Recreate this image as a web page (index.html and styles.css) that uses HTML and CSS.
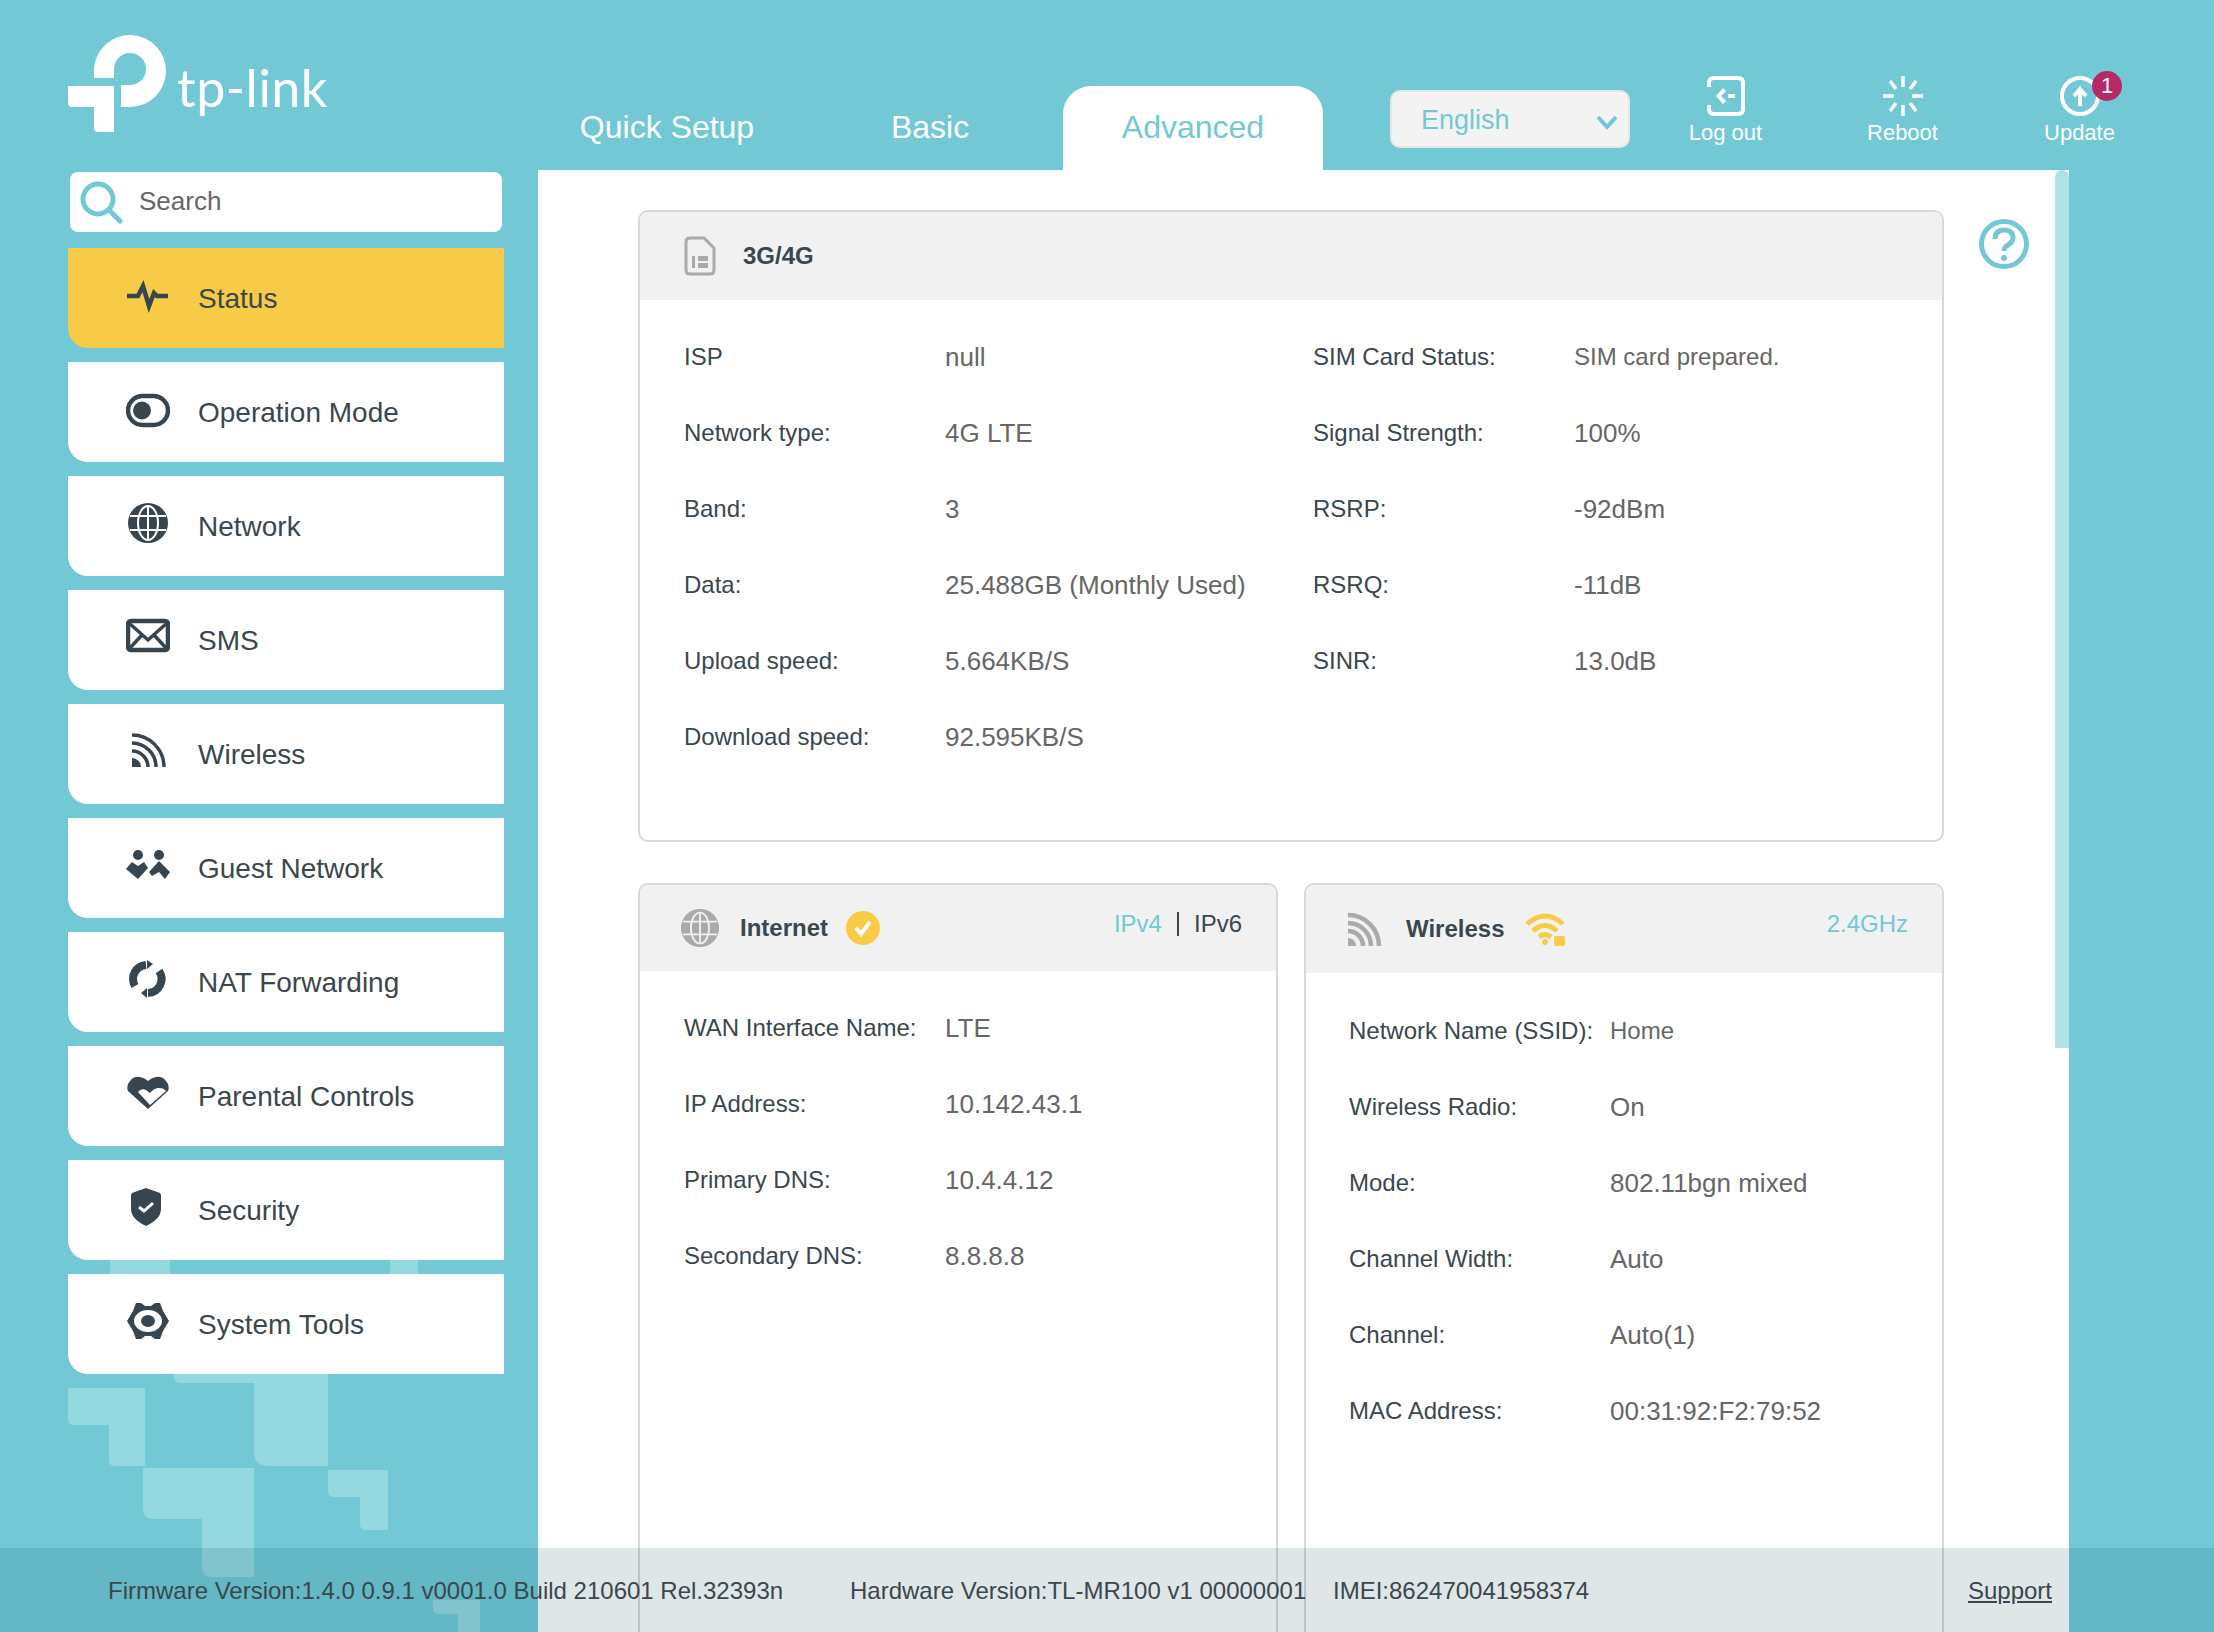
FILE: index.html
```html
<!DOCTYPE html>
<html>
<head>
<title>TP-Link Status</title>
<link rel="stylesheet" href="styles.css">
</head>
<body>

<!-- big faded logo behind the menu -->
<svg class="watermark" width="538" height="262" viewBox="0 0 538 262">
    <path d="M68 18H145V96H115Q109 96 109 90V55H74Q68 55 68 49Z"/>
    <path d="M173 4H254V13H181Q173 13 173 4Z"/>
    <path d="M254 4H328V96H268Q254 96 254 82Z"/>
    <path d="M143 98H254V207H212Q202 207 202 197V149H153Q143 149 143 139Z"/>
    <path d="M328 100H388V160H366Q360 160 360 154V127H334Q328 127 328 121Z"/>
    <path d="M433 230H480V262H458V244H439Q433 244 433 238Z"/>
</svg>
<svg class="watermark-top" width="420" height="14" viewBox="0 0 420 14">
    <rect x="110" width="60" height="14"/>
    <rect x="390" width="28" height="14"/>
</svg>

<div class="header">
    <div class="logo">
        <svg width="100" height="100" viewBox="68 33 100 100">
            <path d="M94 78V69A36 36 0 1 1 130 107H121V85H130A16 16 0 1 0 114 69V78Z"/>
            <path d="M68 86H114V132H98Q94 132 94 128V107H72Q68 107 68 103Z"/>
        </svg>
        <span class="logo-name">tp-link</span>
    </div>
    <div class="tabs">
        <div class="tab">Quick Setup</div>
        <div class="tab">Basic</div>
        <div class="tab active">Advanced</div>
    </div>
    <div class="lang">
        <span>English</span>
        <svg width="22" height="16" viewBox="0 0 22 16"><path d="M2 3L11 13L20 3"/></svg>
    </div>
    <div class="actions">
        <div class="action">
            <svg width="40" height="40" viewBox="0 0 40 40">
                <path d="M3 11V7Q3 2 8 2H32Q37 2 37 7V33Q37 38 32 38H8Q3 38 3 33V29"/>
                <path class="solid" d="M17 12L10 20L17 28L20 25L15 20L20 15Z"/>
                <path d="M22 20H29"/>
            </svg>
            <span>Log out</span>
        </div>
        <div class="action">
            <svg width="40" height="40" viewBox="0 0 40 40">
                <path class="spokes" d="M20 0V11M20 29V40M0 20H11M29 20H40M7 5L13 13M27 27L33 35M33 5L27 13M13 27L7 35"/>
            </svg>
            <span>Reboot</span>
        </div>
        <div class="action">
            <svg width="40" height="40" viewBox="0 0 40 40">
                <circle cx="20" cy="20" r="18"/>
                <path d="M20 30V14M14 20L20 13L26 20"/>
            </svg>
            <span>Update</span>
            <div class="badge">1</div>
        </div>
    </div>
</div>

<div class="main">
    <div class="sidebar">
        <div class="search">
            <svg width="44" height="44" viewBox="0 0 44 44">
                <circle cx="18" cy="18" r="15"/>
                <path d="M29 29L40 40"/>
            </svg>
            <span>Search</span>
        </div>
        <div class="menu">
            <div class="menu-item selected">
                <svg class="menu-icon" width="44" height="44" viewBox="0 0 44 44"><path class="line" d="M1 23H12L17 13L23 33L28 20L31 23H42"/></svg>
                Status
            </div>
            <div class="menu-item">
                <svg class="menu-icon" width="44" height="44" viewBox="0 0 44 44"><rect class="line" x="2" y="9" width="40" height="29" rx="14.5"/><circle cx="16" cy="23.5" r="9"/></svg>
                Operation Mode
            </div>
            <div class="menu-item">
                <svg class="menu-icon" width="44" height="44" viewBox="0 0 44 44">
                    <circle cx="22" cy="22" r="20"/>
                    <path class="cut" d="M4 15H40M4 29H40M22 6V38"/>
                    <ellipse class="cut" cx="22" cy="22" rx="10" ry="17"/>
                </svg>
                Network
            </div>
            <div class="menu-item">
                <svg class="menu-icon" width="44" height="44" viewBox="0 0 44 44"><rect class="line" x="2" y="6" width="40" height="29" rx="3"/><path class="thin" d="M3 8L22 25L41 8M3 34L16 20M41 34L28 20"/></svg>
                SMS
            </div>
            <div class="menu-item">
                <svg class="menu-icon" width="44" height="44" viewBox="0 0 44 44">
                    <path class="thin" d="M6 6A32 32 0 0 1 38 38M6 14A24 24 0 0 1 30 38M6 22A16 16 0 0 1 22 38"/>
                    <path d="M6 29A9 9 0 0 1 15 38H6Z"/>
                </svg>
                Wireless
            </div>
            <div class="menu-item">
                <svg class="menu-icon" width="44" height="44" viewBox="0 0 44 44">
                    <circle cx="12" cy="12" r="5"/><circle cx="33" cy="12" r="5"/>
                    <path d="M0 26L6 19L12 23L18 19L22 25L12 36Z"/>
                    <path d="M44 29L33 18L23 29L26 33L33 29L39 36Z"/>
                </svg>
                Guest Network
            </div>
            <div class="menu-item">
                <svg class="menu-icon" width="44" height="44" viewBox="0 0 44 44">
                    <path class="line wide" d="M9 29A14 14 0 0 1 20 8M33 14A14 14 0 0 1 22 36"/>
                    <path d="M21 3L27 7L21 12ZM21 31L15 36L21 41Z"/>
                </svg>
                NAT Forwarding
            </div>
            <div class="menu-item">
                <svg class="menu-icon" width="44" height="44" viewBox="0 0 44 44">
                    <path d="M22 38L2 20Q0 15 4 10Q8 5 14 6Q19 7 22 10Q25 7 30 6Q36 5 40 10Q44 15 42 20Z"/>
                    <path class="white" d="M24 34L12 21Q15 17 20 19L24 22Q28 17 33 17Q38 17 40 20Z"/>
                </svg>
                Parental Controls
            </div>
            <div class="menu-item">
                <svg class="menu-icon" width="44" height="44" viewBox="0 0 44 44">
                    <path d="M20 3L34 8Q35 9 35 11V24Q35 34 20 41Q5 34 5 24V11Q5 9 6 8Z"/>
                    <path class="tick" d="M13 22L18 26L27 18"/>
                </svg>
                Security
            </div>
            <div class="menu-item">
                <svg class="menu-icon" width="44" height="44" viewBox="0 0 44 44">
                    <path d="M10 4H15L19 7H25L29 4H34L37 12L43 22L37 32L34 40H29L25 37H19L15 40H10L7 32L1 22L7 12Z"/>
                    <ellipse class="white" cx="22" cy="22" rx="14" ry="11"/>
                    <ellipse cx="22" cy="22" rx="7" ry="6"/>
                </svg>
                System Tools
            </div>
        </div>
    </div>

    <div class="panel">
        <div class="content">
            <div class="card top-card">
                <div class="card-head">
                    <svg class="sim-icon" width="32" height="40" viewBox="0 0 32 40">
                        <path class="outline" d="M6 2H20L30 12V34Q30 38 26 38H6Q2 38 2 34V6Q2 2 6 2Z"/>
                        <path class="solid" d="M8 20H11V32H8ZM14 20H24V25H14ZM14 27H24V32H14Z"/>
                    </svg>
                    <span class="card-title">3G/4G</span>
                </div>
                <div class="info four-col">
                    <div class="label">ISP</div><div class="value">null</div>
                    <div class="label">SIM Card Status:</div><div class="value small">SIM card prepared.</div>
                    <div class="label">Network type:</div><div class="value">4G LTE</div>
                    <div class="label">Signal Strength:</div><div class="value">100%</div>
                    <div class="label">Band:</div><div class="value">3</div>
                    <div class="label">RSRP:</div><div class="value">-92dBm</div>
                    <div class="label">Data:</div><div class="value">25.488GB (Monthly Used)</div>
                    <div class="label">RSRQ:</div><div class="value">-11dB</div>
                    <div class="label">Upload speed:</div><div class="value">5.664KB/S</div>
                    <div class="label">SINR:</div><div class="value">13.0dB</div>
                    <div class="label">Download speed:</div><div class="value">92.595KB/S</div>
                </div>
            </div>

            <div class="card-row">
                <div class="card">
                    <div class="card-head short">
                        <svg class="globe-icon" width="40" height="40" viewBox="0 0 44 44">
                            <circle class="solid" cx="22" cy="22" r="21"/>
                            <path class="grid" d="M3 15H41M3 29H41M22 6V38"/>
                            <ellipse class="grid" cx="22" cy="22" rx="10" ry="17"/>
                        </svg>
                        <span class="card-title">Internet</span>
                        <svg class="status-icon" width="34" height="34" viewBox="0 0 34 34">
                            <circle cx="17" cy="17" r="17"/>
                            <path d="M10 17L15 23L24 11"/>
                        </svg>
                        <div class="card-link"><span class="on">IPv4</span><span class="sep"></span><span>IPv6</span></div>
                    </div>
                    <div class="info two-col">
                        <div class="label">WAN Interface Name:</div><div class="value">LTE</div>
                        <div class="label">IP Address:</div><div class="value">10.142.43.1</div>
                        <div class="label">Primary DNS:</div><div class="value">10.4.4.12</div>
                        <div class="label">Secondary DNS:</div><div class="value">8.8.8.8</div>
                    </div>
                </div>
                <div class="card">
                    <div class="card-head wide-pad">
                        <svg class="wifi-grey" width="36" height="36" viewBox="0 0 36 36">
                            <path d="M1 4A31 31 0 0 1 32 35M1 12A23 23 0 0 1 24 35M1 20A15 15 0 0 1 16 35"/>
                            <path class="fill" d="M1 27A8 8 0 0 1 9 35H1Z"/>
                        </svg>
                        <span class="card-title">Wireless</span>
                        <svg class="wifi-yellow" width="42" height="34" viewBox="0 0 42 34">
                            <path d="M2 12Q20 -4 38 12M8 19Q20 8 32 19M14 25Q20 20 26 25"/>
                            <circle class="fill" cx="20" cy="30" r="3"/>
                            <rect class="fill" x="29" y="24" width="11" height="10" rx="2"/>
                        </svg>
                        <div class="card-link"><span class="on">2.4GHz</span></div>
                    </div>
                    <div class="info two-col">
                        <div class="label">Network Name (SSID):</div><div class="value small">Home</div>
                        <div class="label">Wireless Radio:</div><div class="value">On</div>
                        <div class="label">Mode:</div><div class="value">802.11bgn mixed</div>
                        <div class="label">Channel Width:</div><div class="value">Auto</div>
                        <div class="label">Channel:</div><div class="value">Auto(1)</div>
                        <div class="label">MAC Address:</div><div class="value">00:31:92:F2:79:52</div>
                    </div>
                </div>
            </div>
        </div>
        <svg class="help" width="50" height="50" viewBox="0 0 50 50">
            <circle cx="25" cy="25" r="22.5"/>
            <path d="M16 20Q16 11 25 11Q34 11 34 19Q34 23 29 26Q25 28 25 32"/>
            <circle class="dot" cx="25" cy="39" r="3"/>
        </svg>
        <div class="scrollbar"><div class="thumb"></div></div>
    </div>
</div>

<div class="footer">
    <span class="firmware">Firmware Version:1.4.0 0.9.1 v0001.0 Build 210601 Rel.32393n</span>
    <span class="hardware">Hardware Version:TL-MR100 v1 00000001</span>
    <span class="imei">IMEI:862470041958374</span>
    <a class="support">Support</a>
</div>

</body>
</html>
```

FILE: styles.css
```css
* { box-sizing: border-box; }
body { margin: 0; width: 2214px; height: 1632px; position: relative; overflow: hidden; background: #72c9d5; font-family: "Liberation Sans", Arial, sans-serif; color: #3a474e; }

.watermark { position: absolute; left: 0; top: 1370px; fill: #94d8e0; }
.watermark-top { position: absolute; left: 0; top: 1260px; fill: #94d8e0; }

.header { display: flex; height: 170px; position: relative; }
.logo { width: 537px; padding: 33px 0 0 68px; display: flex; align-items: flex-start; }
.logo svg { fill: white; flex: none; }
.logo-name { font-family: Lato, sans-serif; font-weight: 400; font-size: 52px; color: white; margin: 24px 0 0 9px; line-height: 60px; letter-spacing: 0.5px; }
.tabs { display: flex; gap: 3px; align-self: flex-end; }
.tab { width: 260px; height: 84px; padding-top: 20px; text-align: center; font-size: 32px; line-height: 42px; color: white; border-radius: 28px 28px 0 0; }
.tab.active { background: white; color: #72c9d5; }
.lang { width: 240px; height: 58px; margin: 90px 0 0 67px; padding: 3px 10px 0 29px; display: flex; align-items: center; justify-content: space-between; background: #f3f3f3; border: 2px solid #e6e6e6; border-radius: 10px; font-size: 27px; color: #72c9d5; }
.lang svg { fill: none; stroke: #72c9d5; stroke-width: 4; margin-top: 2px; }
.actions { display: flex; margin-left: 7px; padding-top: 76px; }
.action { width: 177px; position: relative; display: flex; flex-direction: column; align-items: center; color: white; font-size: 22px; }
.action svg { fill: none; stroke: white; stroke-width: 4; }
.action svg .solid { fill: white; stroke: none; }
.action svg .spokes { stroke-width: 3.5; }
.action span { margin-top: 4px; line-height: 26px; }
.badge { position: absolute; left: 101px; top: -5px; width: 30px; height: 30px; border-radius: 50%; background: #b32a66; color: white; font-size: 22px; line-height: 30px; text-align: center; }

.main { display: flex; height: 1462px; position: relative; }
.sidebar { width: 538px; padding: 2px 34px 0 68px; }
.search { width: 432px; height: 60px; margin-left: 2px; padding: 0 0 2px 10px; display: flex; align-items: center; gap: 14px; background: white; border-radius: 8px; font-size: 26px; color: #666; }
.search svg { fill: none; stroke: #72c9d5; stroke-width: 5; stroke-linecap: round; flex: none; margin-top: 4px; }
.search span { margin-left: 1px; }
.menu { display: flex; flex-direction: column; gap: 14px; margin-top: 16px; }
.menu-item { width: 436px; height: 100px; padding: 2px 0 0 58px; display: flex; align-items: center; gap: 28px; background: white; border-radius: 0 0 0 20px; font-size: 28px; }
.menu-item.selected { background: #f7cb45; }
.menu-icon { fill: #36454f; margin-bottom: 9px; flex: none; }
.menu-icon .line { fill: none; stroke: #36454f; stroke-width: 4.5; }
.menu-icon .line.wide { stroke-width: 8; }
.menu-icon .thin { fill: none; stroke: #36454f; stroke-width: 3.5; }
.menu-icon .cut { fill: none; stroke: white; stroke-width: 2; }
.menu-icon .white { fill: white; }
.menu-icon .tick { fill: none; stroke: white; stroke-width: 3; }

.panel { width: 1531px; height: 1462px; display: flex; background: white; overflow: hidden; }
.content { width: 1406px; flex: none; padding: 40px 0 0 100px; }
.help { flex: none; margin: 49px 0 0 35px; fill: none; stroke: #72c9d5; stroke-width: 5; }
.help .dot { fill: #72c9d5; stroke: none; }
.scrollbar { width: 14px; margin-left: auto; flex: none; }
.thumb { height: 878px; background: #b2e2e8; border-radius: 7px 7px 0 0; }

.card { border: 2px solid #d8d8d8; border-radius: 10px 10px 0 0; }
.top-card { height: 632px; border-radius: 10px; }
.card-row { display: grid; grid-template-columns: 640px 640px; gap: 26px; margin-top: 41px; height: 800px; }
.card-head { height: 88px; position: relative; display: flex; align-items: center; background: #f1f1f1; border-radius: 8px 8px 0 0; padding-left: 44px; }
.card-head.short { height: 86px; padding-left: 40px; }
.card-head.wide-pad { padding-left: 41px; }
.card-title { font-size: 24px; font-weight: bold; margin-left: 27px; }
.short .card-title { margin-left: 20px; }
.wide-pad .card-title { margin-left: 23px; }
.sim-icon .outline { fill: none; stroke: #aaa; stroke-width: 3; }
.sim-icon .solid, .globe-icon .solid { fill: #aaa; }
.globe-icon .grid { fill: none; stroke: #f1f1f1; stroke-width: 2; }
.status-icon { margin-left: 18px; }
.status-icon circle { fill: #f7cb45; }
.status-icon path { fill: none; stroke: white; stroke-width: 4; }
.wifi-grey { fill: none; stroke: #aaa; stroke-width: 4.5; }
.wifi-grey .fill { fill: #aaa; stroke: none; }
.wifi-yellow { fill: none; stroke: #f7cb45; stroke-width: 5; margin-left: 20px; }
.wifi-yellow .fill { fill: #f7cb45; stroke: none; }
.card-link { position: absolute; right: 34px; top: 24px; display: flex; align-items: center; font-size: 24px; line-height: 30px; }
.card-link .on { color: #72c9d5; }
.card-link .sep { width: 2px; height: 24px; margin: 0 15px; background: #3a474e; }

.info { display: grid; grid-auto-rows: 76px; padding: 19px 0 0 44px; font-size: 24px; align-items: center; }
.card-row .info { padding-top: 19px; }
.card-row .card:last-child .info { padding: 20px 0 0 43px; }
.four-col { grid-template-columns: 261px 368px 261px 1fr; }
.two-col { grid-template-columns: 261px 1fr; }
.value { color: #666; font-size: 26px; }
.value.small { font-size: 24px; }

.footer { position: absolute; left: 0; right: 0; bottom: 0; height: 84px; padding: 2px 0 0 108px; display: flex; align-items: center; background: rgba(20,80,90,0.14); font-size: 24px; }
.firmware { width: 742px; }
.hardware { width: 483px; }
.support { margin-left: auto; margin-right: 162px; text-decoration: underline; }
```
